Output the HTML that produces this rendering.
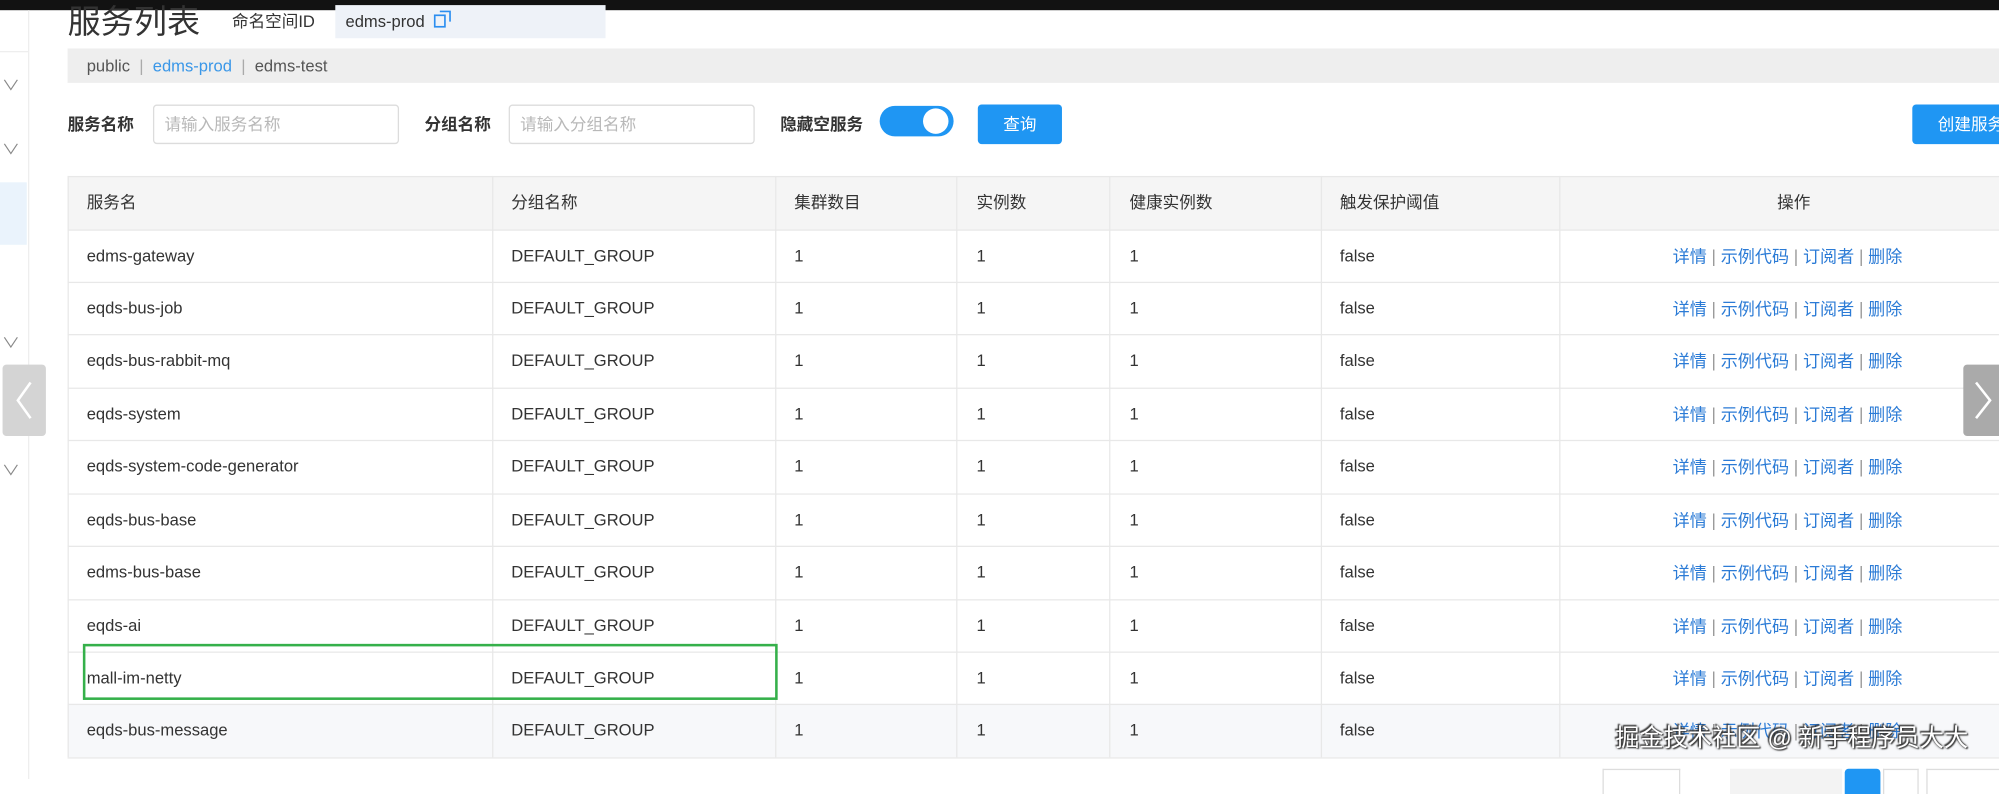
<!DOCTYPE html>
<html><head><meta charset="utf-8"><style>
*{margin:0;padding:0;box-sizing:border-box}
html,body{width:1999px;height:779px;overflow:hidden;background:#fff}
#w{position:absolute;left:0;top:0;width:1568px;height:611px;transform:scale(1.27487,1.27496);transform-origin:0 0;font-family:"Liberation Sans","Noto Sans CJK SC",sans-serif;font-size:13px;color:#333;line-height:16px}
.a{position:absolute;white-space:nowrap}
.vl{position:absolute;width:1px;background:#e8e8e8}
.hl{position:absolute;height:1px;background:#e8e8e8}
.chev{position:absolute;left:3px;color:#888;font-size:11px;transform:scaleX(1.3)}
.inp{position:absolute;height:31px;border:1px solid #dcdcdc;border-radius:3px;color:#b8b8b8;padding:7px 8px}
.btn{position:absolute;background:#1f96f3;color:#fff;border-radius:3px;text-align:center;line-height:31px;height:31px}
.lk{color:#2b7bd6}.sep{color:#999}
.act{font-size:13.4px;line-height:16px}
</style></head><body><div id="w">
<div class="a" style="left:0;top:0;width:1568px;height:8px;background:#121212"></div>
<div class="vl" style="left:22px;top:8px;height:603px;background:#eee"></div>
<div class="hl" style="left:0;top:40px;width:22px;background:#eee"></div>
<div class="a" style="left:0;top:143px;width:21px;height:49px;background:#eaf3fc"></div>
<div class="chev" style="top:60px">∨</div>
<div class="chev" style="top:110px">∨</div>
<div class="chev" style="top:262px">∨</div>
<div class="chev" style="top:362px">∨</div>
<div class="a" style="left:53px;top:3px;font-size:26px;color:#333;line-height:28px">服务列表</div>
<div class="a" style="left:182px;top:9px;font-size:13px">命名空间ID</div>
<div class="a" style="left:263px;top:4px;width:212px;height:26px;background:#eef2f8"></div>
<div class="a" style="left:271px;top:9px">edms-prod</div>
<svg class="a" style="left:340px;top:8px" width="14" height="14" viewBox="0 0 14 14"><rect x="1" y="4" width="8" height="9" fill="none" stroke="#2b8ef0" stroke-width="1.3"/><path d="M5 1H13V9" fill="none" stroke="#2b8ef0" stroke-width="1.3"/></svg>
<div class="a" style="left:53px;top:38px;width:1515px;height:27px;background:#eeeeee"></div>
<div class="a" style="left:68px;top:44px;color:#555">public <span style="color:#aaa">&nbsp;|&nbsp;</span> <span style="color:#3a97e8">edms-prod</span> <span style="color:#aaa">&nbsp;|&nbsp;</span> edms-test</div>
<div class="a" style="left:53px;top:90px;font-weight:bold">服务名称</div>
<div class="inp" style="left:120px;top:82px;width:193px">请输入服务名称</div>
<div class="a" style="left:333px;top:90px;font-weight:bold">分组名称</div>
<div class="inp" style="left:399px;top:82px;width:193px">请输入分组名称</div>
<div class="a" style="left:612px;top:90px;font-weight:bold">隐藏空服务</div>
<div class="a" style="left:690px;top:83px;width:58px;height:24px;border-radius:12px;background:#1f96f3"></div>
<div class="a" style="left:724px;top:85px;width:20px;height:20px;border-radius:10px;background:#fff"></div>
<div class="btn" style="left:767px;top:82px;width:66px">查询</div>
<div class="btn" style="left:1500px;top:82px;width:80px;text-align:left;padding-left:20px">创建服务</div>
<div class="a" style="left:53px;top:138px;width:1515px;height:42px;background:#f5f5f5"></div>
<div class="a" style="left:53px;top:552px;width:1515px;height:42px;background:#f7f8fa"></div>
<div class="hl" style="left:53px;top:138px;width:1515px"></div>
<div class="hl" style="left:53px;top:180px;width:1515px"></div>
<div class="hl" style="left:53px;top:221px;width:1515px"></div>
<div class="hl" style="left:53px;top:262px;width:1515px"></div>
<div class="hl" style="left:53px;top:304px;width:1515px"></div>
<div class="hl" style="left:53px;top:345px;width:1515px"></div>
<div class="hl" style="left:53px;top:387px;width:1515px"></div>
<div class="hl" style="left:53px;top:428px;width:1515px"></div>
<div class="hl" style="left:53px;top:470px;width:1515px"></div>
<div class="hl" style="left:53px;top:511px;width:1515px"></div>
<div class="hl" style="left:53px;top:552px;width:1515px"></div>
<div class="hl" style="left:53px;top:594px;width:1515px"></div>
<div class="vl" style="left:53px;top:138px;height:456px"></div>
<div class="vl" style="left:386px;top:138px;height:456px"></div>
<div class="vl" style="left:608px;top:138px;height:456px"></div>
<div class="vl" style="left:750px;top:138px;height:456px"></div>
<div class="vl" style="left:870px;top:138px;height:456px"></div>
<div class="vl" style="left:1036px;top:138px;height:456px"></div>
<div class="vl" style="left:1223px;top:138px;height:456px"></div>
<div class="a" style="left:68px;top:151px">服务名</div>
<div class="a" style="left:401px;top:151px">分组名称</div>
<div class="a" style="left:623px;top:151px">集群数目</div>
<div class="a" style="left:766px;top:151px">实例数</div>
<div class="a" style="left:886px;top:151px">健康实例数</div>
<div class="a" style="left:1051px;top:151px">触发保护阈值</div>
<div class="a" style="left:1394px;top:151px">操作</div>
<div id="rows"></div>
<div class="a" style="left:65px;top:505px;width:545px;height:44px;border:2px solid #35b04a"></div>
<div class="a" style="left:1257px;top:603px;width:61px;height:20px;border:1px solid #ddd;border-bottom:none"></div>
<div class="a" style="left:1357px;top:603px;width:88px;height:20px;background:#f3f3f3"></div>
<div class="a" style="left:1447px;top:603px;width:28px;height:20px;background:#1f96f3;border-radius:3px 3px 0 0"></div>
<div class="a" style="left:1477px;top:603px;width:28px;height:20px;border:1px solid #ddd;border-bottom:none"></div>
<div class="a" style="left:1511px;top:603px;width:60px;height:20px;border:1px solid #ddd;border-bottom:none"></div>
<div class="a" style="left:2px;top:286px;width:34px;height:56px;background:#d4d4d4;border-radius:3px"></div>
<svg class="a" style="left:10px;top:298px" width="18" height="32" viewBox="0 0 18 32"><path d="M14 2L4 16L14 30" fill="none" stroke="#fff" stroke-width="2"/></svg>
<div class="a" style="left:1540px;top:286px;width:34px;height:56px;background:#aaa;border-radius:3px"></div>
<svg class="a" style="left:1547px;top:298px" width="18" height="32" viewBox="0 0 18 32"><path d="M3 2L14 16L3 30" fill="none" stroke="#fff" stroke-width="2"/></svg>
<div class="a" style="left:1267px;top:569px;font-size:19px;line-height:22px;color:#fff;text-shadow:0 0 2px #333,1px 1px 1px #333,-1px -1px 1px #333">掘金技术社区 @ 新手程序员大大</div>
</div>
<script>
var n=["edms-gateway","eqds-bus-job","eqds-bus-rabbit-mq","eqds-system","eqds-system-code-generator","eqds-bus-base","edms-bus-base","eqds-ai","mall-im-netty","eqds-bus-message"];
var y=[180,221,262,304,345,387,428,470,511,552],h="";
for(var i=0;i<10;i++){var t=y[i]+13;
h+='<div class="a" style="left:68px;top:'+t+'px">'+n[i]+'</div><div class="a" style="left:401px;top:'+t+'px">DEFAULT_GROUP</div><div class="a" style="left:623px;top:'+t+'px">1</div><div class="a" style="left:766px;top:'+t+'px">1</div><div class="a" style="left:886px;top:'+t+'px">1</div><div class="a" style="left:1051px;top:'+t+'px">false</div><div class="a act" style="left:1312px;top:'+(t+1)+'px"><span class="lk">详情</span> <span class="sep">|</span> <span class="lk">示例代码</span> <span class="sep">|</span> <span class="lk">订阅者</span> <span class="sep">|</span> <span class="lk">删除</span></div>';}
document.getElementById("rows").outerHTML=h;
</script>
</body></html>
